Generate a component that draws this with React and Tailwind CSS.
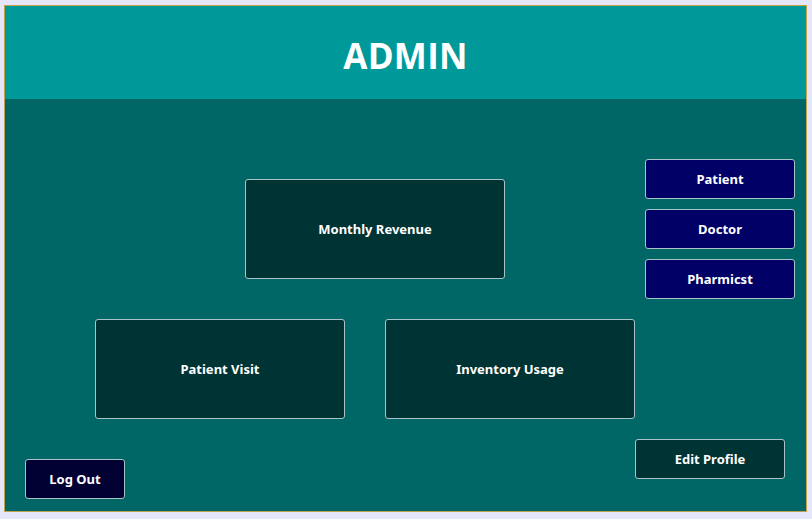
import React from "react";

const tile =
    "flex items-center justify-center pt-[2px] bg-[#003333] border border-[#a9c4c8] rounded-[3px] text-white text-[13px] font-bold";
const nav =
    "flex items-center justify-center pt-[2px] w-[150px] h-[40px] bg-[#000066] border border-[#a9c4c8] rounded-[3px] text-white text-[13px] font-bold";

const App = () => {
    return (
        <div className="w-[812px] h-[519px] bg-[#e6e6fa] pt-[5px] pl-[4px] font-['Noto_Sans',sans-serif]">
            <div className="w-[803px] h-[507px] border border-[#c2a24a] flex flex-col">
                <header className="h-[93px] bg-[#009999] flex items-center justify-center pt-[8px]">
                    <h1 className="text-white text-[35px] font-bold tracking-[0.3px] font-['Open_Sans',sans-serif]">ADMIN</h1>
                </header>

                <main className="flex-1 bg-[#006666] flex flex-col">
                    <div className="flex pt-[60px]">
                        <button className={`${tile} w-[260px] h-[100px] ml-[240px] mt-[20px]`}>Monthly Revenue</button>
                        <div className="flex flex-col gap-[10px] ml-[140px]">
                            <button className={nav}>Patient</button>
                            <button className={nav}>Doctor</button>
                            <button className={nav}>Pharmicst</button>
                        </div>
                    </div>

                    <div className="flex gap-[40px] ml-[90px] mt-[20px]">
                        <button className={`${tile} w-[250px] h-[100px]`}>Patient Visit</button>
                        <button className={`${tile} w-[250px] h-[100px]`}>Inventory Usage</button>
                    </div>

                    <div className="flex items-start">
                        <button className="flex items-center justify-center pt-[2px] w-[100px] h-[40px] ml-[20px] mt-[40px] bg-[#000033] border border-[#a9c4c8] rounded-[3px] text-white text-[13px] font-bold">
                            Log Out
                        </button>
                        <button className={`${tile} w-[150px] h-[40px] ml-[510px] mt-[20px]`}>Edit Profile</button>
                    </div>
                </main>
            </div>
        </div>
    );
};

export default App;
